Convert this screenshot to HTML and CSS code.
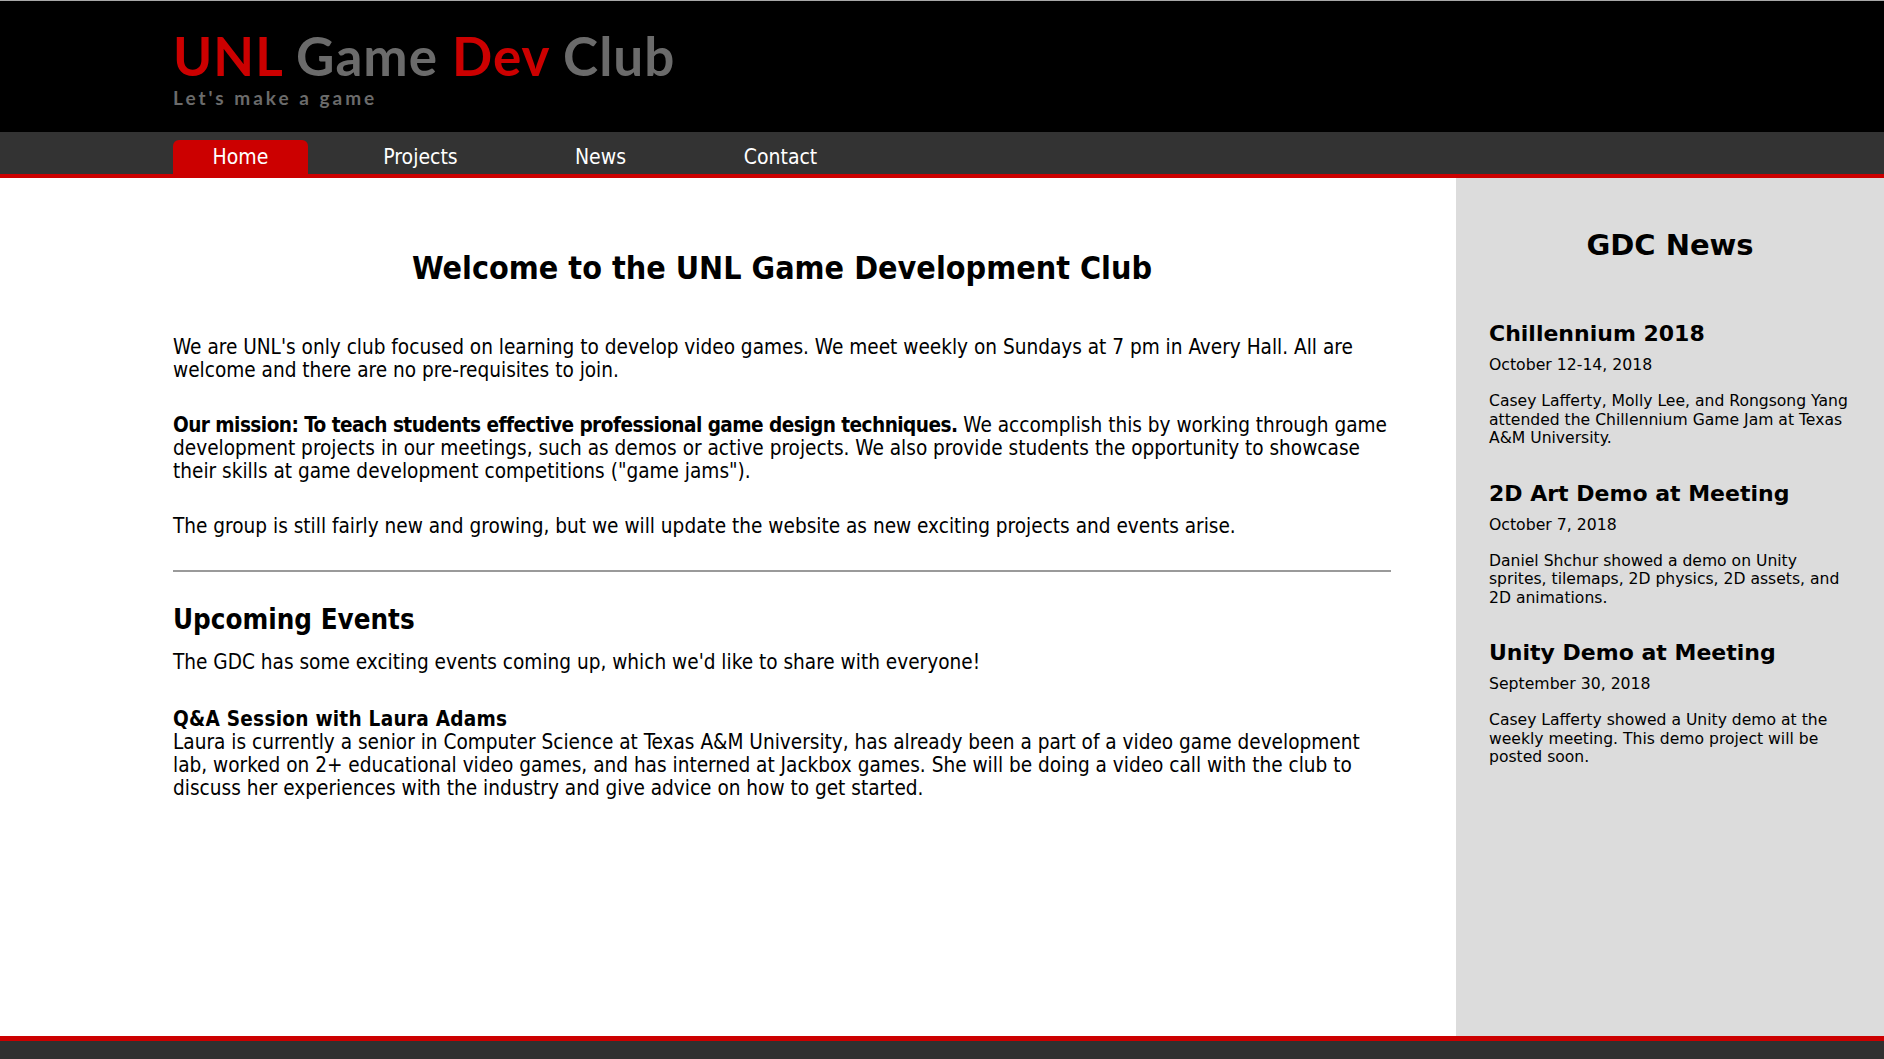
FILE: index.html
```html
<!DOCTYPE html>
<html lang="en">
<head>
<meta charset="utf-8">
<title>UNL Game Dev Club</title>
<link rel="stylesheet" href="styles.css">
</head>
<body>
<header class="site-header">
  <div class="brand">
    <div class="brand-title"><span class="red">UNL</span> <span class="grey">Game</span> <span class="red">Dev</span> <span class="grey">Club</span></div>
    <div class="brand-tag">Let's make a game</div>
  </div>
</header>
<nav class="site-nav">
  <ul class="nav-list">
    <li class="nav-item active">Home</li>
    <li class="nav-item">Projects</li>
    <li class="nav-item">News</li>
    <li class="nav-item">Contact</li>
  </ul>
</nav>
<div class="page">
  <main class="main">
    <h1 class="main-title">Welcome to the UNL Game Development Club</h1>
    <p class="text p-first">We are UNL's only club focused on learning to develop video games. We meet weekly on Sundays at 7 pm in Avery Hall. All are welcome and there are no pre-requisites to join.</p>
    <p class="text"><strong class="mission">Our mission: To teach students effective professional game design techniques.</strong> We accomplish this by working through game development projects in our meetings, such as demos or active projects. We also provide students the opportunity to showcase their skills at game development competitions ("game jams").</p>
    <p class="text">The group is still fairly new and growing, but we will update the website as new exciting projects and events arise.</p>
    <hr class="divider">
    <h2 class="section-title">Upcoming Events</h2>
    <p class="text p-intro">The GDC has some exciting events coming up, which we'd like to share with everyone!</p>
    <p class="text"><strong class="event-title">Q&amp;A Session with Laura Adams</strong><br>Laura is currently a senior in Computer Science at Texas A&amp;M University, has already been a part of a video game development lab, worked on 2+ educational video games, and has interned at Jackbox games. She will be doing a video call with the club to discuss her experiences with the industry and give advice on how to get started.</p>
  </main>
  <aside class="sidebar">
    <h2 class="side-title">GDC News</h2>
    <div class="news">
      <h3 class="news-title">Chillennium 2018</h3>
      <div class="news-date">October 12-14, 2018</div>
      <p class="news-text">Casey Lafferty, Molly Lee, and Rongsong Yang attended the Chillennium Game Jam at Texas A&amp;M University.</p>
    </div>
    <div class="news">
      <h3 class="news-title">2D Art Demo at Meeting</h3>
      <div class="news-date">October 7, 2018</div>
      <p class="news-text">Daniel Shchur showed a demo on Unity sprites, tilemaps, 2D physics, 2D assets, and 2D animations.</p>
    </div>
    <div class="news">
      <h3 class="news-title">Unity Demo at Meeting</h3>
      <div class="news-date">September 30, 2018</div>
      <p class="news-text">Casey Lafferty showed a Unity demo at the weekly meeting. This demo project will be posted soon.</p>
    </div>
  </aside>
</div>
<footer class="site-footer"></footer>
</body>
</html>
```
FILE: styles.css
```css
* { box-sizing: border-box; }
html, body { margin: 0; padding: 0; }
body {
  background: #fff;
  color: #000;
  font-family: "DejaVu Sans Condensed", "DejaVu Sans", sans-serif;
}
.site-header {
  background: #000;
  border-top: 1px solid #a8a8a8;
  height: 132px;
  padding: 28px 0 0 173px;
}
.brand-title {
  font-family: "Lato", "DejaVu Sans", sans-serif;
  font-weight: 700;
  font-size: 53px;
  line-height: 54px;
  letter-spacing: 1px;
}
.red { color: #cc0000; }
.grey { color: #6b6b6b; }
.brand-tag {
  font-family: "Lato", "DejaVu Sans", sans-serif;
  font-weight: 700;
  color: #6b6b6b;
  font-size: 19px;
  line-height: 22px;
  letter-spacing: 3px;
  margin-top: 4px;
}
.site-nav {
  background: #333;
  height: 46px;
  border-bottom: 4px solid #cc0000;
}
.nav-list {
  list-style: none;
  margin: 0;
  padding: 8px 0 0 173px;
  display: flex;
  gap: 45px;
}
.nav-item {
  width: 135px;
  height: 34px;
  line-height: 34px;
  text-align: center;
  color: #fff;
  font-family: "DejaVu Sans Condensed", sans-serif;
  font-size: 21px;
  border-radius: 6px 6px 0 0;
}
.nav-item.active { background: #cc0000; }
.page {
  display: flex;
  min-height: 858px;
}
.main {
  flex: 1;
  padding: 70px 65px 40px 173px;
}
.main-title {
  margin: 0 0 48px;
  text-align: center;
  font-size: 32px;
  line-height: 40px;
  font-weight: 700;
}
.text {
  margin: 0 0 32px;
  font-size: 20.6px;
  line-height: 23px;
}
.mission { letter-spacing: -0.55px; }
.event-title { letter-spacing: 0.25px; }
.divider {
  border: 0;
  border-top: 2px solid #9a9a9a;
  margin: 0 0 31px;
}
.section-title {
  margin: 0 0 16px;
  font-size: 27.5px;
  line-height: 32px;
  font-weight: 700;
}
.p-intro { margin-bottom: 34px; }
.sidebar {
  width: 428px;
  background: #dcdcdc;
  padding: 47px 33px 40px 33px;
  font-family: "DejaVu Sans", sans-serif;
}
.side-title {
  margin: 0 0 54px;
  text-align: center;
  font-size: 29px;
  line-height: 40px;
  font-weight: 700;
}
.news { margin-bottom: 31px; }
.news-title {
  margin: 0 0 6px;
  font-size: 22px;
  line-height: 30px;
  font-weight: 700;
}
.news-date {
  font-size: 15.7px;
  line-height: 20px;
  margin-bottom: 17px;
}
.news-text {
  margin: 0;
  font-size: 15.6px;
  line-height: 18.5px;
}
.site-footer {
  border-top: 5px solid #cc0000;
  background: #303030;
  height: 23px;
}
```
